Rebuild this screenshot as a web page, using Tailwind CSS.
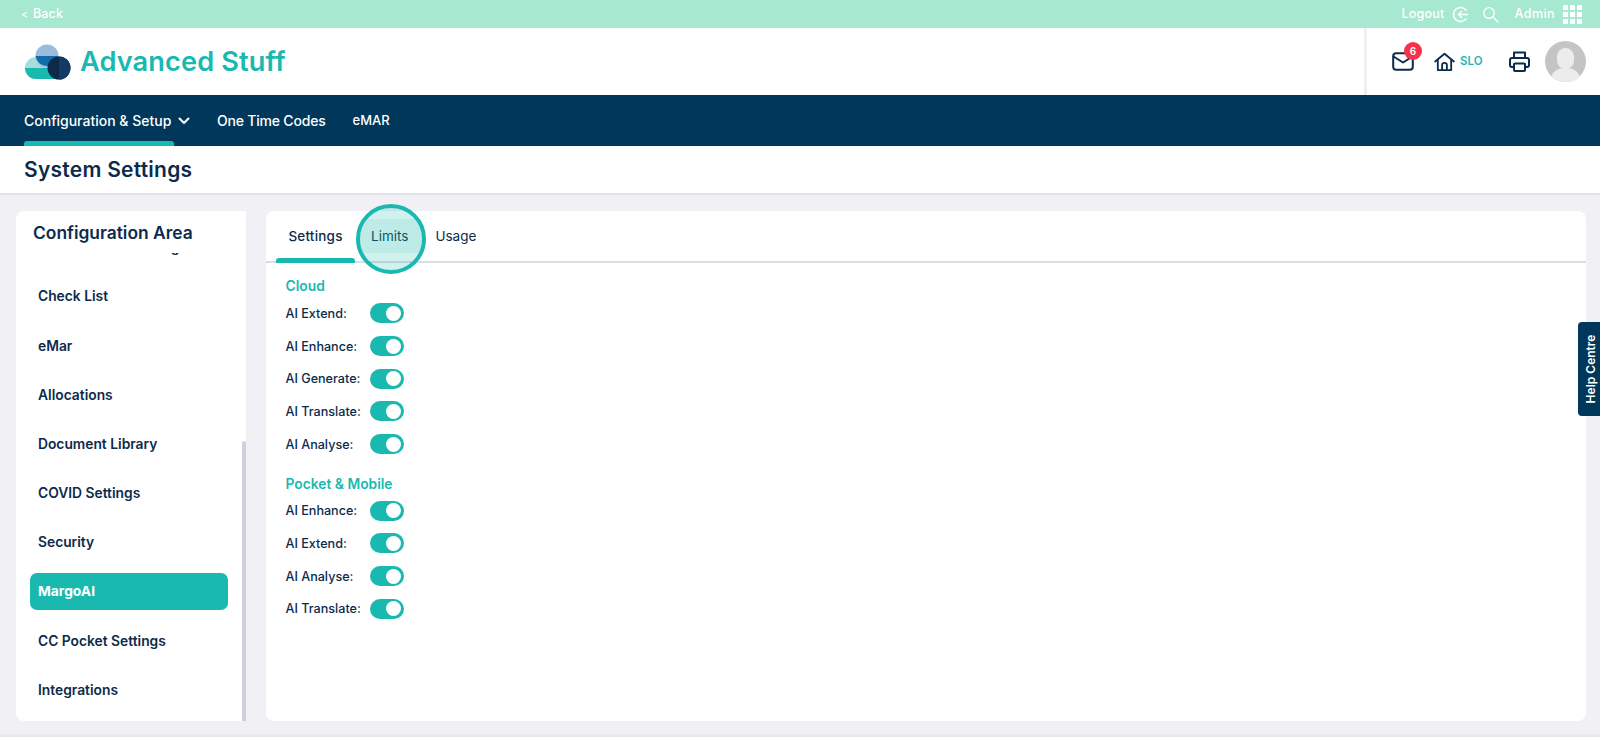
<!DOCTYPE html>
<html lang="en">
<head>
<meta charset="UTF-8">
<title>System Settings</title>
<script src="https://cdn.jsdelivr.net/npm/@tailwindcss/browser@4"></script>
</head>
<body class="h-screen overflow-hidden flex flex-col bg-[#f0f0f5] font-['Inter',sans-serif] text-[#0c2b4b]">

<!-- Top strip -->
<div class="h-[28px] shrink-0 bg-[#a7e8d0] flex items-center justify-between pl-[21px] pr-[18px] text-white text-[12.5px] font-medium">
  <span class="tracking-[0.2px]"><span class="text-[10px] mr-[5px]">&lt;</span>Back</span>
  <div class="flex items-center">
    <span class="tracking-[0.2px]">Logout</span>
    <svg class="ml-[8px]" width="17" height="17" viewBox="0 0 17 17" fill="none" stroke="white" stroke-width="1.5" stroke-linecap="round" stroke-linejoin="round"><path d="M14 4.2A7 7 0 1 0 14 12.8"/><path d="M15.5 8.5H6.5M9.5 5.5l-3 3 3 3"/></svg>
    <svg class="ml-[13px]" width="17" height="17" viewBox="0 0 17 17" fill="none" stroke="white" stroke-width="1.3" stroke-linecap="round"><circle cx="7" cy="7" r="5.3"/><path d="M11 11l5 5"/></svg>
    <span class="ml-[15px] tracking-[0.45px]">Admin</span>
    <div class="ml-[8px] grid grid-cols-3 gap-[2px]">
      <i class="size-[5px] bg-white"></i><i class="size-[5px] bg-white"></i><i class="size-[5px] bg-white"></i>
      <i class="size-[5px] bg-white"></i><i class="size-[5px] bg-white"></i><i class="size-[5px] bg-white"></i>
      <i class="size-[5px] bg-white"></i><i class="size-[5px] bg-white"></i><i class="size-[5px] bg-white"></i>
    </div>
  </div>
</div>

<!-- Header -->
<div class="h-[67px] shrink-0 bg-white flex items-center justify-between pl-[24px]">
  <div class="flex items-center gap-[9px]">
    <svg width="47" height="36" viewBox="0 0 47 36">
      <path d="M12 13h20v22H12a11 11 0 0 1 0-22z" fill="#a6dcdc"/>
      <path d="M1 24h30v11H12A11 11 0 0 1 1 24z" fill="#1ab9b0"/>
      <circle cx="23" cy="12" r="11.5" fill="#9dbcdc"/>
      <path d="M11.6 12h22.8a11.5 11.5 0 0 1-22.8 0z" fill="#0f6cab"/>
      <circle cx="35" cy="24" r="11.5" fill="#0c2b4b"/>
      <path d="M35 12.5a11.5 11.5 0 0 1 0 23z" fill="#123a63"/>
    </svg>
    <span class="text-[27.2px] leading-none font-semibold text-[#1ab9b0] tracking-[0.1px]">Advanced Stuff</span>
  </div>
  <div class="h-full w-[236px] border-l-[3px] border-[#eeeef3] flex items-center pl-[25px] pr-[14px]">
    <div class="relative">
      <svg class="block" width="22" height="19" viewBox="0 0 22 19" fill="none" stroke="#0c2b4b" stroke-width="2" stroke-linejoin="round" stroke-linecap="round"><rect x="1.2" y="1.2" width="19.6" height="16.6" rx="3"/><path d="M1.5 4.5L11 10.5l9.5-6"/></svg>
      <span class="absolute -top-[10px] left-[12px] size-[18px] rounded-full bg-[#f9304a] text-white text-[10px] font-semibold flex items-center justify-center">6</span>
    </div>
    <svg class="ml-[20px]" width="21" height="20" viewBox="0 0 22 20" fill="none" stroke="#0c2b4b" stroke-width="1.9" stroke-linejoin="round" stroke-linecap="round"><path d="M1.2 9.5L11 1.3l9.8 8.2"/><path d="M4 8v10.5h14V8"/><path d="M8.5 18.5v-5a2.5 2.5 0 0 1 5 0v5"/></svg>
    <span class="ml-[5px] text-[11.5px] font-semibold text-[#1ab9b0]">SLO</span>
    <svg class="ml-[26px]" width="21" height="21" viewBox="0 0 21 21" fill="none" stroke="#0c2b4b" stroke-width="2" stroke-linejoin="round"><path d="M5 7V1.5h11V7"/><path d="M5 16H3a2 2 0 0 1-2-2V9a2 2 0 0 1 2-2h15a2 2 0 0 1 2 2v5a2 2 0 0 1-2 2h-2"/><rect x="5" y="12.5" width="11" height="7.5" rx="1"/></svg>
    <div class="ml-auto relative size-[41px] rounded-full bg-[#c4c4c4] overflow-hidden">
      <div class="absolute left-[12px] top-[7px] w-[17px] h-[21px] rounded-full bg-[#ececec]"></div>
      <div class="absolute left-[5px] top-[27px] w-[31px] h-[20px] rounded-t-[14px] bg-[#ececec]"></div>
    </div>
  </div>
</div>

<!-- Nav -->
<div class="h-[51px] shrink-0 bg-[#00375a] flex items-stretch pl-[24px] text-white text-[14px] font-medium">
  <div class="relative flex items-center w-[150px]">
    <span class="whitespace-nowrap">Configuration &amp; Setup</span>
    <div class="absolute bottom-0 left-0 w-[150px] h-[5px] rounded-t-[3px] bg-[#1ab9b0]"></div>
  </div>
  <svg class="self-center ml-[4px]" width="12" height="8" viewBox="0 0 12 8" fill="none" stroke="white" stroke-width="2" stroke-linecap="round" stroke-linejoin="round"><path d="M1.5 1.5L6 6l4.5-4.5"/></svg>
  <span class="self-center ml-[27px] tracking-[-0.2px]">One Time Codes</span>
  <span class="self-center ml-[27px] text-[13px]">eMAR</span>
</div>

<!-- Page title -->
<div class="h-[49px] shrink-0 bg-white border-b-2 border-[#e3e3ea] flex items-center pl-[24px]">
  <h1 class="text-[21px] font-semibold tracking-[0.25px]">System Settings</h1>
</div>

<!-- Content -->
<div class="flex-1 min-h-0 flex gap-[20px] pl-[16px] pr-[14px] pt-[16px] pb-[12px]">

  <!-- Sidebar card -->
  <div class="relative w-[230px] shrink-0 bg-white rounded-l-[8px] flex flex-col overflow-hidden">
    <div class="h-[42px] shrink-0 pl-[17px] pt-[10px] text-[17.4px] leading-[24px] font-semibold whitespace-nowrap">Configuration Area</div>
    <div class="flex-1 min-h-0 overflow-hidden text-[13.8px] font-semibold flex flex-col pl-[14px] pr-[18px]">
      <div class="h-[49.2px] shrink-0 -mt-[30px] flex items-center pl-[8px] whitespace-nowrap">Questionnaire Listing</div>
      <div class="h-[49.2px] shrink-0 flex items-center pl-[8px]">Check List</div>
      <div class="h-[49.2px] shrink-0 flex items-center pl-[8px]">eMar</div>
      <div class="h-[49.2px] shrink-0 flex items-center pl-[8px]">Allocations</div>
      <div class="h-[49.2px] shrink-0 flex items-center pl-[8px]">Document Library</div>
      <div class="h-[49.2px] shrink-0 flex items-center pl-[8px]">COVID Settings</div>
      <div class="h-[49.2px] shrink-0 flex items-center pl-[8px]">Security</div>
      <div class="h-[37px] my-[6px] shrink-0 flex items-center pl-[8px] rounded-[7px] bg-[#1ab9b0] text-white font-bold">MargoAI</div>
      <div class="h-[49.2px] shrink-0 flex items-center pl-[8px]">CC Pocket Settings</div>
      <div class="h-[49.2px] shrink-0 flex items-center pl-[8px]">Integrations</div>
    </div>
    <div class="absolute right-0 bottom-0 top-[230px] w-[4px] rounded-t-[2px] bg-[#cfcfe0]"></div>
  </div>

  <!-- Main card -->
  <div class="relative flex-1 min-w-0 bg-white rounded-[8px]">
    <div class="h-[52px] border-b-2 border-[#dcdce4] flex pl-[10px] text-[13.5px]">
      <div class="relative w-[79px] flex items-center justify-center font-medium tracking-[0.2px]">Settings
        <div class="absolute left-0 -bottom-[2px] w-[79px] h-[5px] rounded-t-[3px] bg-[#1ab9b0]"></div>
      </div>
      <div class="ml-[16px] flex items-center">Limits</div>
      <div class="ml-[27px] flex items-center">Usage</div>
    </div>

    <div class="pl-[19.5px] pt-[14px] text-[12.6px] font-medium">
      <div class="h-[19px] mb-[1px] flex items-center text-[13.8px] font-semibold text-[#1ab9b0]">Cloud</div>
      <div class="h-[32.7px] flex items-center"><span class="w-[84.5px] pt-[2px]">AI Extend:</span><span class="relative w-[34px] h-[20px] rounded-full bg-[#1ab9b0]"><i class="absolute right-[3px] top-[2.5px] size-[15px] rounded-full bg-white"></i></span></div>
      <div class="h-[32.7px] flex items-center"><span class="w-[84.5px] pt-[2px]">AI Enhance:</span><span class="relative w-[34px] h-[20px] rounded-full bg-[#1ab9b0]"><i class="absolute right-[3px] top-[2.5px] size-[15px] rounded-full bg-white"></i></span></div>
      <div class="h-[32.7px] flex items-center"><span class="w-[84.5px] pt-[2px]">AI Generate:</span><span class="relative w-[34px] h-[20px] rounded-full bg-[#1ab9b0]"><i class="absolute right-[3px] top-[2.5px] size-[15px] rounded-full bg-white"></i></span></div>
      <div class="h-[32.7px] flex items-center"><span class="w-[84.5px] pt-[2px]">AI Translate:</span><span class="relative w-[34px] h-[20px] rounded-full bg-[#1ab9b0]"><i class="absolute right-[3px] top-[2.5px] size-[15px] rounded-full bg-white"></i></span></div>
      <div class="h-[32.7px] flex items-center"><span class="w-[84.5px] pt-[2px]">AI Analyse:</span><span class="relative w-[34px] h-[20px] rounded-full bg-[#1ab9b0]"><i class="absolute right-[3px] top-[2.5px] size-[15px] rounded-full bg-white"></i></span></div>
      <div class="h-[19px] mt-[14px] mb-[1px] flex items-center text-[13.8px] font-semibold text-[#1ab9b0]">Pocket &amp; Mobile</div>
      <div class="h-[32.7px] flex items-center"><span class="w-[84.5px] pt-[2px]">AI Enhance:</span><span class="relative w-[34px] h-[20px] rounded-full bg-[#1ab9b0]"><i class="absolute right-[3px] top-[2.5px] size-[15px] rounded-full bg-white"></i></span></div>
      <div class="h-[32.7px] flex items-center"><span class="w-[84.5px] pt-[2px]">AI Extend:</span><span class="relative w-[34px] h-[20px] rounded-full bg-[#1ab9b0]"><i class="absolute right-[3px] top-[2.5px] size-[15px] rounded-full bg-white"></i></span></div>
      <div class="h-[32.7px] flex items-center"><span class="w-[84.5px] pt-[2px]">AI Analyse:</span><span class="relative w-[34px] h-[20px] rounded-full bg-[#1ab9b0]"><i class="absolute right-[3px] top-[2.5px] size-[15px] rounded-full bg-white"></i></span></div>
      <div class="h-[32.7px] flex items-center"><span class="w-[84.5px] pt-[2px]">AI Translate:</span><span class="relative w-[34px] h-[20px] rounded-full bg-[#1ab9b0]"><i class="absolute right-[3px] top-[2.5px] size-[15px] rounded-full bg-white"></i></span></div>
    </div>

    <!-- Highlight ring around the Limits tab -->
    <div class="absolute left-[90px] -top-[7px] size-[70px] rounded-full border-[4px] border-[#1ab9b0] bg-[#1ab9b0]/20 overflow-hidden">
      <div class="mt-[11px] h-[34px] bg-[#1ab9b0]/10"></div>
    </div>
  </div>
</div>
<div class="h-[4px] shrink-0 bg-gradient-to-b from-[#f0f0f5] to-[#e6e6ea]"></div>

<!-- Help tab -->
<div class="absolute right-0 top-[322px] w-[22px] h-[94px] pl-[4px] rounded-l-[4px] bg-[#00375a] flex items-center justify-center">
  <span class="-rotate-90 whitespace-nowrap text-white text-[12px] font-semibold">Help Centre</span>
</div>
</body>
</html>
